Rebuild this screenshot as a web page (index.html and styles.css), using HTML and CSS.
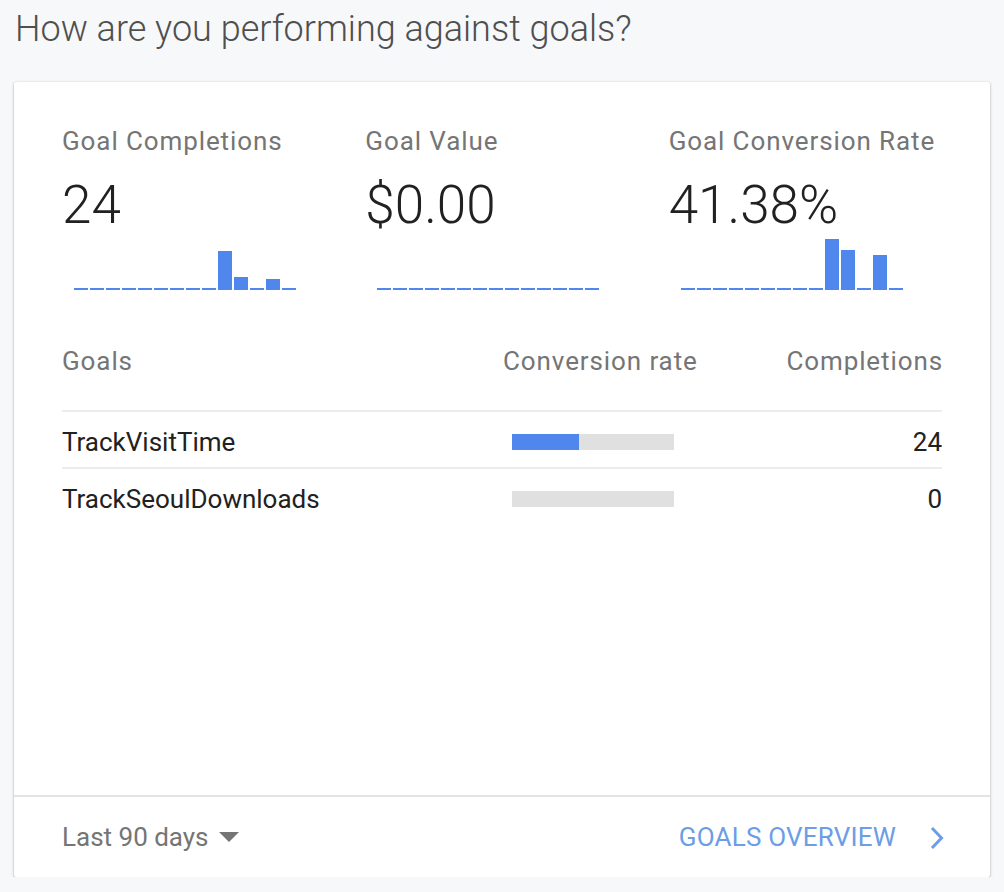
FILE: index.html
```html
<!DOCTYPE html>
<html lang="en">
<head>
<meta charset="utf-8">
<title>Goals</title>
<link rel="stylesheet" href="styles.css">
</head>
<body>
<h1 class="title">How are you performing against goals?</h1>
<section class="card">
  <div class="card-main">
    <div class="metrics">
      <div class="metric">
        <div class="metric-label">Goal Completions</div>
        <div class="metric-value">24</div>
        <div class="spark">
          <span class="bar" style="height:2px"></span><span class="bar" style="height:2px"></span><span class="bar" style="height:2px"></span><span class="bar" style="height:2px"></span><span class="bar" style="height:2px"></span><span class="bar" style="height:2px"></span><span class="bar" style="height:2px"></span><span class="bar" style="height:2px"></span><span class="bar" style="height:2px"></span><span class="bar" style="height:39px"></span><span class="bar" style="height:13px"></span><span class="bar" style="height:2px"></span><span class="bar" style="height:11px"></span><span class="bar" style="height:2px"></span>
        </div>
      </div>
      <div class="metric">
        <div class="metric-label">Goal Value</div>
        <div class="metric-value">$0.00</div>
        <div class="spark">
          <span class="bar" style="height:2px"></span><span class="bar" style="height:2px"></span><span class="bar" style="height:2px"></span><span class="bar" style="height:2px"></span><span class="bar" style="height:2px"></span><span class="bar" style="height:2px"></span><span class="bar" style="height:2px"></span><span class="bar" style="height:2px"></span><span class="bar" style="height:2px"></span><span class="bar" style="height:2px"></span><span class="bar" style="height:2px"></span><span class="bar" style="height:2px"></span><span class="bar" style="height:2px"></span><span class="bar" style="height:2px"></span>
        </div>
      </div>
      <div class="metric">
        <div class="metric-label">Goal Conversion Rate</div>
        <div class="metric-value">41.38%</div>
        <div class="spark">
          <span class="bar" style="height:2px"></span><span class="bar" style="height:2px"></span><span class="bar" style="height:2px"></span><span class="bar" style="height:2px"></span><span class="bar" style="height:2px"></span><span class="bar" style="height:2px"></span><span class="bar" style="height:2px"></span><span class="bar" style="height:2px"></span><span class="bar" style="height:2px"></span><span class="bar" style="height:51px"></span><span class="bar" style="height:40px"></span><span class="bar" style="height:2px"></span><span class="bar" style="height:35px"></span><span class="bar" style="height:2px"></span>
        </div>
      </div>
    </div>

    <div class="goals">
      <div class="goals-row goals-head">
        <div class="col-name">Goals</div>
        <div class="col-rate">Conversion rate</div>
        <div class="col-count">Completions</div>
      </div>
      <div class="goals-row">
        <div class="col-name">TrackVisitTime</div>
        <div class="col-rate"><div class="rate-bar"><div class="rate-fill" style="width:41.38%"></div></div></div>
        <div class="col-count">24</div>
      </div>
      <div class="goals-row goals-last">
        <div class="col-name">TrackSeoulDownloads</div>
        <div class="col-rate"><div class="rate-bar"><div class="rate-fill" style="width:0%"></div></div></div>
        <div class="col-count">0</div>
      </div>
    </div>
  </div>

  <footer class="card-footer">
    <div class="range">Last 90 days <span class="caret"></span></div>
    <a class="overview" href="#">GOALS OVERVIEW
      <svg class="chev" width="16" height="24" viewBox="0 0 16 24" aria-hidden="true"><path d="M4 2 L13.5 12 L4 22" fill="none" stroke="currentColor" stroke-width="3"/></svg>
    </a>
  </footer>
</section>
</body>
</html>
```

FILE: styles.css
```css
* { box-sizing: border-box; }

html, body {
  margin: 0;
  padding: 0;
  background: #f7f8fa;
  font-family: Roboto, "Noto Sans", Arial, sans-serif;
}

.title {
  margin: 0;
  padding: 5px 0 0 15px;
  height: 82px;
  font-size: 36px;
  line-height: 48px;
  font-weight: 300;
  color: #4f4f4f;
}

.card {
  margin: 0 14px;
  height: 795px;
  background: #fff;
  border-radius: 2px;
  box-shadow: 0 1px 3px rgba(0,0,0,0.3), 0 0 1px rgba(0,0,0,0.12);
  display: flex;
  flex-direction: column;
}

.card-main {
  flex: 1;
  padding: 43px 48px 0 48px;
}

.metrics {
  display: grid;
  grid-template-columns: repeat(3, 1fr);
  column-gap: 30px;
}

.metric-label {
  font-size: 26px;
  line-height: 32px;
  letter-spacing: 0.9px;
  color: #757575;
  white-space: nowrap;
}

.metric-value {
  margin-top: 16px;
  font-size: 53px;
  line-height: 64px;
  font-weight: 300;
  color: #212121;
}

.spark {
  margin-top: 1px;
  margin-left: 12px;
  height: 52px;
  display: flex;
  align-items: flex-end;
  gap: 2px;
}

.bar {
  width: 14px;
  background: #5087ec;
}

.goals {
  margin-top: 55px;
}

.goals-row {
  display: grid;
  grid-template-columns: 1fr 194px 245px;
  align-items: center;
  font-size: 26px;
  line-height: 32px;
  color: #212121;
  padding: 14px 0 9px;
  border-bottom: 2px solid #ececec;
  white-space: nowrap;
}

.goals-head {
  padding: 0 0 33px;
  color: #757575;
  letter-spacing: 0.9px;
}

.goals-head .col-count {
  margin-right: -1px;
}

.goals-last {
  border-bottom: none;
}

.col-count {
  text-align: right;
}

.rate-bar {
  margin-left: 9px;
  width: 162px;
  height: 16px;
  background: #e0e0e0;
}

.rate-fill {
  height: 100%;
  background: #5087ec;
}

.card-footer {
  height: 82px;
  border-top: 2px solid #e4e4e4;
  display: flex;
  align-items: center;
  justify-content: space-between;
  padding: 0 46px 0 48px;
}

.range {
  font-size: 26px;
  line-height: 32px;
  color: #757575;
  display: flex;
  align-items: center;
}

.caret {
  margin-left: 10px;
  width: 0;
  height: 0;
  border-left: 10px solid transparent;
  border-right: 10px solid transparent;
  border-top: 10px solid #757575;
}

.overview {
  font-size: 26px;
  line-height: 32px;
  letter-spacing: 0.2px;
  color: #6c9de6;
  text-decoration: none;
  display: flex;
  align-items: center;
  gap: 32px;
}

.chev {
  display: block;
  margin-top: 2px;
}
```
